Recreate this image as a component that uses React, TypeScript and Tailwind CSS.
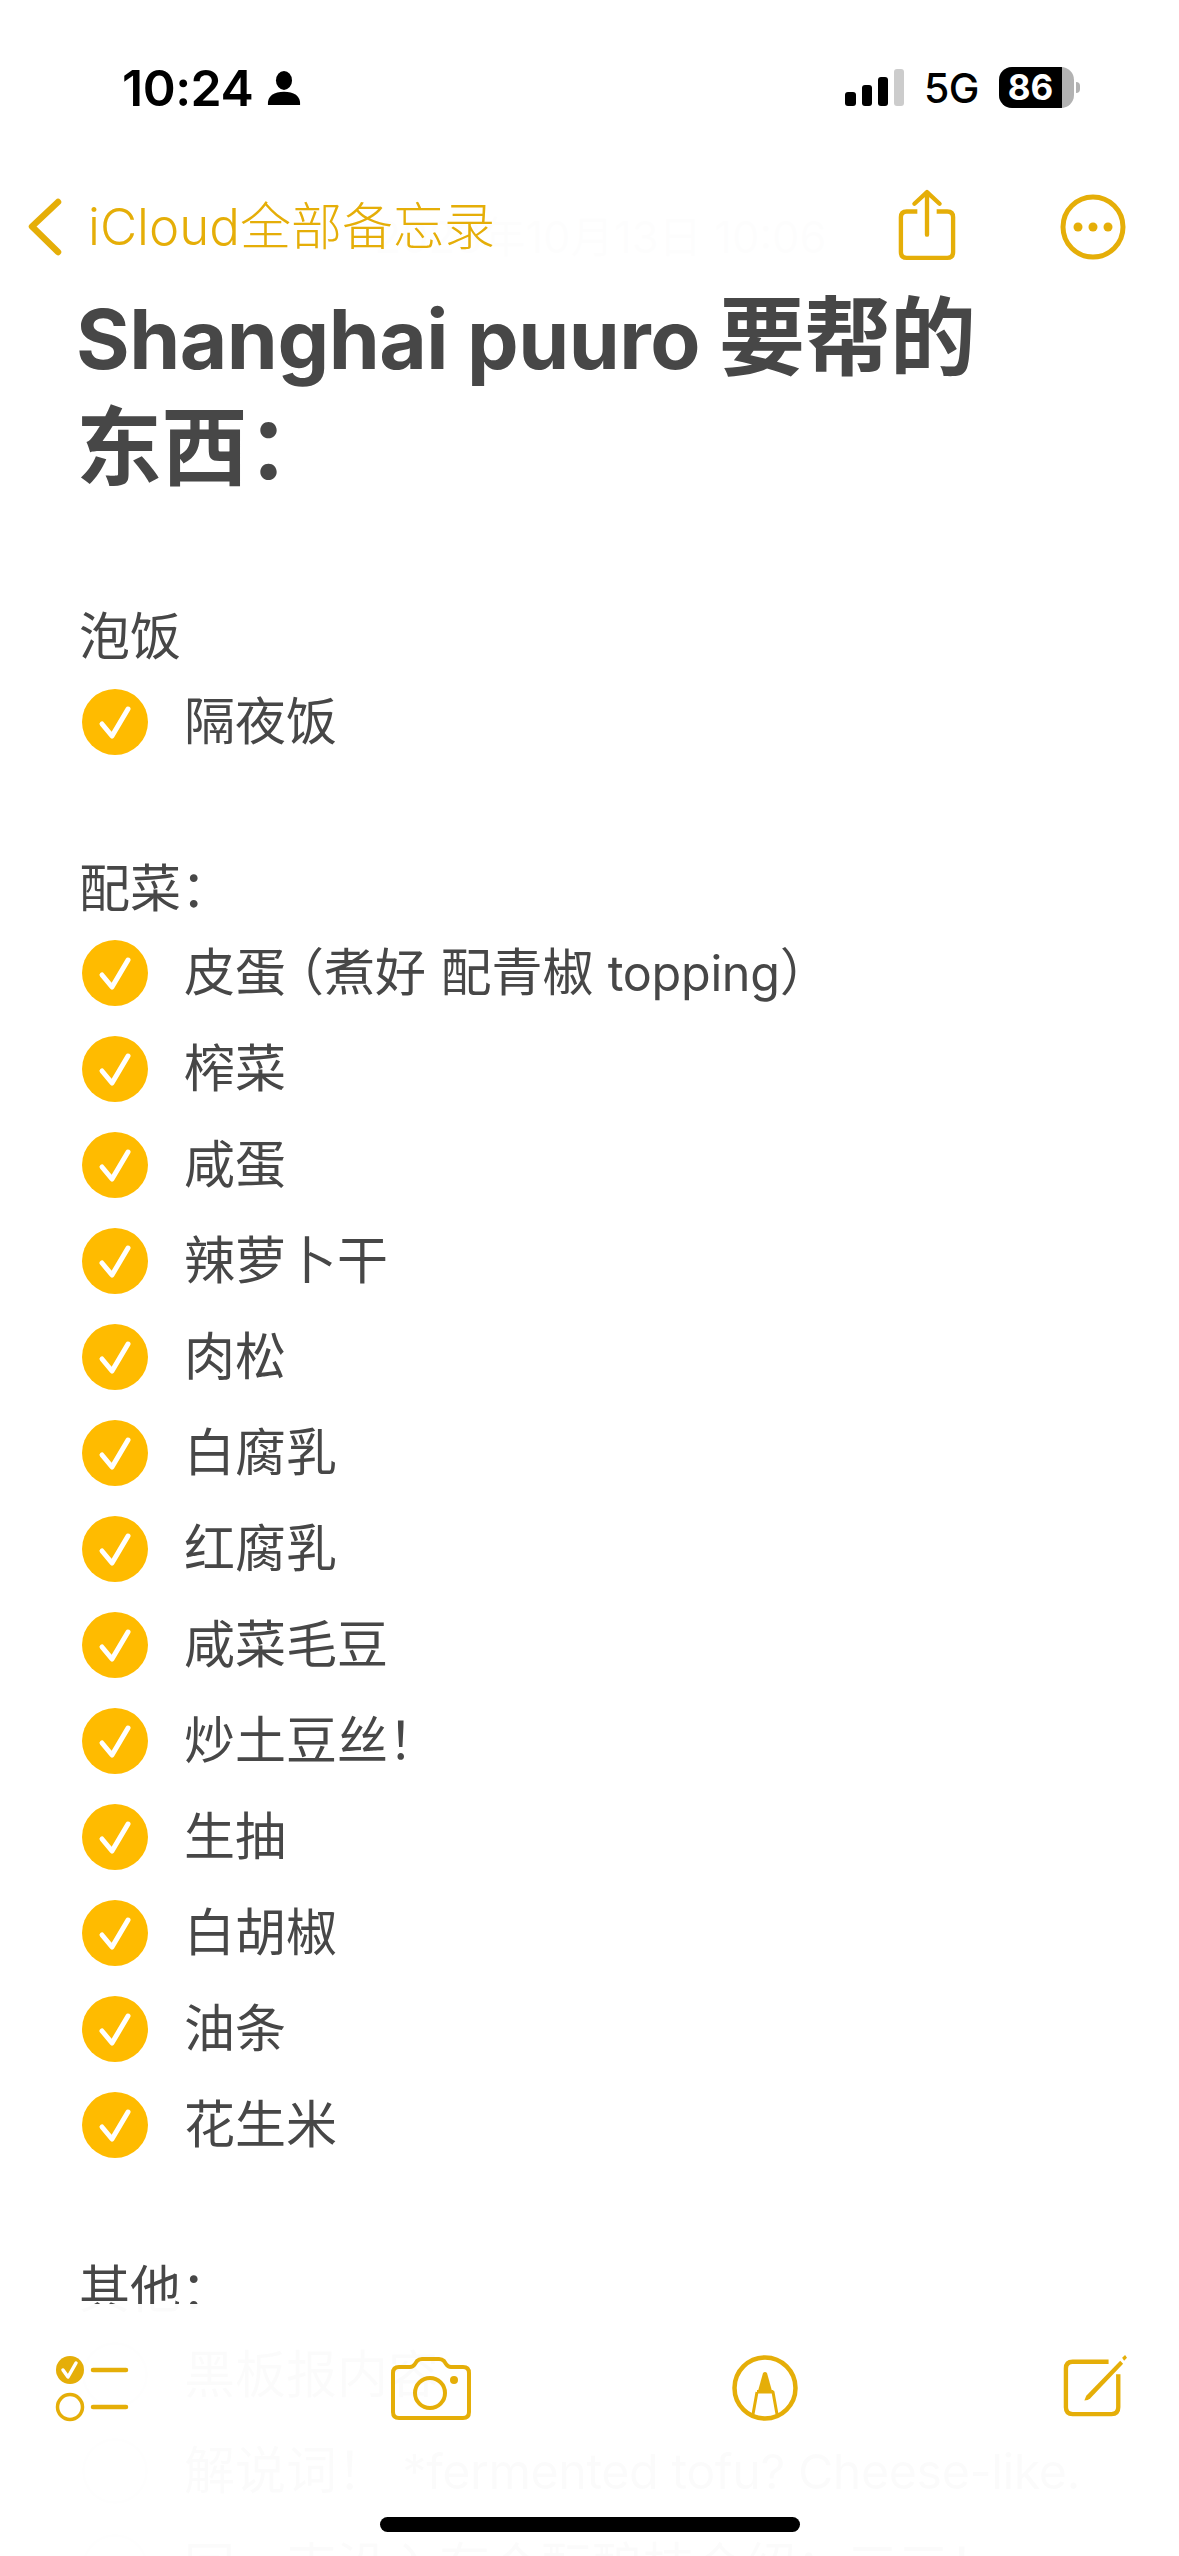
import React from "react";

const GOLD = "#E5AE08";

const section1: React.ReactNode[] = [
  <>皮蛋<span className="-ml-[13px]">（</span>煮好 配青椒 <span className="text-[48.5px] tracking-[-0.3px]">topping</span>）</>,
  "榨菜",
  "咸蛋",
  "辣萝卜干",
  "肉松",
  "白腐乳",
  "红腐乳",
  "咸菜毛豆",
  "炒土豆丝！",
  "生抽",
  "白胡椒",
  "油条",
  "花生米",
];

function CheckRow({ label, done = true }: { label: React.ReactNode; done?: boolean }) {
  return (
    <div className="flex h-[96px] items-center">
      {done ? (
        <svg width="66" height="66" viewBox="0 0 66 66" className="ml-[3px] shrink-0">
          <circle cx="33" cy="33" r="33" fill="#FFBB00" />
          <path d="M20 35 L30 47 L46 20" fill="none" stroke="#fff" strokeWidth="5" strokeLinecap="round" strokeLinejoin="round" />
        </svg>
      ) : (
        <div className="ml-[3px] h-[66px] w-[66px] shrink-0 rounded-full border-[3px] border-[#c8c8c8]" />
      )}
      <span className="ml-[36px] whitespace-nowrap">{label}</span>
    </div>
  );
}

function StatusBar() {
  return (
    <div className="absolute left-0 top-0 z-20 h-[130px] w-full text-black">
      <div className="absolute left-[122px] top-[58px] flex items-center gap-[14px]">
        <span className="text-[50px] font-semibold leading-[60px] tracking-[-0.5px]">10:24</span>
        <svg width="34" height="36" viewBox="0 0 36 36">
          <ellipse cx="18" cy="10" rx="8.5" ry="10" fill="#000" />
          <path d="M1 36 C0 26 8 22 18 22 C28 22 36 26 35 36 Z" fill="#000" />
        </svg>
      </div>
      <div className="absolute left-[845px] top-[67px] flex items-start">
        <svg width="60" height="40" viewBox="0 0 60 40">
          <rect x="0" y="25" width="11" height="14" rx="3" fill="#000" />
          <rect x="17" y="18" width="10" height="21" rx="3" fill="#000" />
          <rect x="33" y="10" width="10" height="29" rx="3" fill="#000" />
          <rect x="49" y="2" width="10" height="37" rx="3" fill="#ccc" />
        </svg>
        <span className="ml-[19px] text-[41px] font-medium leading-[42px] tracking-[-0.5px]">5G</span>
        <div className="ml-[20px] flex items-center">
          <div className="flex h-[41px] w-[75px] items-center overflow-hidden rounded-[13px] bg-[#b2b2b2]">
            <div className="flex h-full w-[63px] items-center justify-center bg-black text-[35px] font-bold leading-none text-white">86</div>
          </div>
          <div className="ml-[2px] h-[11px] w-[4px] rounded-r-full bg-[#b2b2b2]" />
        </div>
      </div>
    </div>
  );
}

function NavBar() {
  return (
    <div className="absolute left-0 top-0 z-10 h-[286px] w-full bg-white/[0.985]">
      <svg width="36" height="58" viewBox="0 0 36 58" className="absolute left-[27px] top-[198px]">
        <path d="M31 4 L5 28.5 L31 54" fill="none" stroke={GOLD} strokeWidth="6.5" strokeLinecap="round" strokeLinejoin="round" />
      </svg>
      <span className="absolute left-[88px] top-[190px] whitespace-nowrap text-[51px] font-light leading-[74px] text-[#E5AE08]">iCloud全部备忘录</span>
      <svg width="58" height="74" viewBox="0 0 60 74" className="absolute left-[898px] top-[188px]">
        <path d="M20 23 H9 Q3 23 3 29 V65 Q3 71 9 71 H51 Q57 71 57 65 V29 Q57 23 51 23 H40" fill="none" stroke={GOLD} strokeWidth="4.5" />
        <path d="M30 47 V3 M17 15 L30 3 L43 15" fill="none" stroke={GOLD} strokeWidth="4.5" strokeLinecap="round" strokeLinejoin="round" />
      </svg>
      <svg width="66" height="66" viewBox="0 0 66 66" className="absolute left-[1060px] top-[194px]">
        <circle cx="33" cy="33" r="30" fill="none" stroke={GOLD} strokeWidth="5" />
        <circle cx="18" cy="33" r="4.5" fill={GOLD} />
        <circle cx="33" cy="33" r="4.5" fill={GOLD} />
        <circle cx="48" cy="33" r="4.5" fill={GOLD} />
      </svg>
    </div>
  );
}

function ToolBar() {
  return (
    <div className="absolute bottom-0 left-0 z-10 h-[252px] w-full bg-white/[0.98]">
      <svg width="80" height="72" viewBox="0 0 80 72" className="absolute left-[54px] top-[50px]">
        <circle cx="16" cy="16" r="14" fill={GOLD} />
        <path d="M9 16 L14 23 L22 9" fill="none" stroke="#fff" strokeWidth="3.5" strokeLinecap="round" strokeLinejoin="round" />
        <circle cx="16" cy="53" r="12.5" fill="none" stroke={GOLD} strokeWidth="3.5" />
        <path d="M39 16 H72 M39 53 H72" fill="none" stroke={GOLD} strokeWidth="4.5" strokeLinecap="round" />
      </svg>
      <svg width="80" height="64" viewBox="0 0 80 64" className="absolute left-[391px] top-[53px]">
        <path d="M8 10 H19 Q22 10 24 7 L26 4 Q28 2 31 2 H48 Q51 2 53 4 L55 7 Q57 10 60 10 H72 Q78 10 78 16 V55 Q78 61 72 61 H8 Q2 61 2 55 V16 Q2 10 8 10 Z" fill="none" stroke={GOLD} strokeWidth="4" />
        <circle cx="39" cy="36" r="15" fill="none" stroke={GOLD} strokeWidth="4" />
        <circle cx="63" cy="23" r="4" fill={GOLD} />
      </svg>
      <svg width="66" height="66" viewBox="0 0 66 66" className="absolute left-[732px] top-[51px]">
        <circle cx="33" cy="33" r="30.5" fill="none" stroke={GOLD} strokeWidth="4.5" />
        <path d="M31 18 Q33 16 35 18 L40 36 H26 Z" fill={GOLD} />
        <path d="M25 37 H41 L45.5 62 M25 37 L20.5 62" fill="none" stroke={GOLD} strokeWidth="3" strokeLinejoin="round" />
        <rect x="25" y="35" width="16" height="3" fill={GOLD} />
      </svg>
      <svg width="64" height="64" viewBox="0 0 66 66" className="absolute left-[1063px] top-[49px]">
        <path d="M47 9 H10 Q3 9 3 16 V56 Q3 63 10 63 H50 Q57 63 57 56 V22" fill="none" stroke={GOLD} strokeWidth="4.5" />
        <path d="M24 44 L59 8 L62 11 L28 47 Q26 49 22 49 Z" fill={GOLD} />
        <path d="M61 5 L64 2 L66 5 L63 8 Z" fill={GOLD} />
      </svg>
      <div className="absolute left-[380px] top-[213px] h-[15px] w-[420px] rounded-full bg-black" />
    </div>
  );
}

export default function App() {
  return (
    <div
      className="relative h-[2556px] w-[1179px] overflow-hidden bg-white text-[51px] leading-[74px] text-[#474747]"
      style={{ fontFamily: 'Inter, "Noto Sans CJK SC", sans-serif' }}
    >
      <StatusBar />
      <NavBar />
      <div className="flex flex-col px-[79px] pt-[200px]">
        <div className="h-[85px] whitespace-nowrap pl-[22px] text-center text-[43.5px] leading-[74px] text-[#888]">2023年10月13日 10:06</div>
        <h1 className="-ml-[3px] whitespace-nowrap text-[82px] font-bold leading-[110px] tracking-[-0.5px]">
          Shanghai puuro <span className="text-[86px] leading-none">要帮的</span>
          <br />
          <span className="text-[86px] leading-none">东西：</span>
        </h1>
        <div className="mt-[95px]">泡饭</div>
        <CheckRow label="隔夜饭" />
        <div className="mt-[82px]">配菜：</div>
        <div className="-mt-px">
          {section1.map((label, i) => (
            <CheckRow key={i} label={label} />
          ))}
        </div>
        <div className="mt-[80px]">其他：</div>
        <CheckRow label="黑板报内容" done={false} />
        <CheckRow
          label={<>解说词！ <span className="text-[48.5px] tracking-[-0.5px]">*fermented tofu? Cheese-like.</span></>}
          done={false}
        />
        <CheckRow label="回一束没入有个酝酿枝介绍：三三！" done={false} />
      </div>
      <ToolBar />
    </div>
  );
}
